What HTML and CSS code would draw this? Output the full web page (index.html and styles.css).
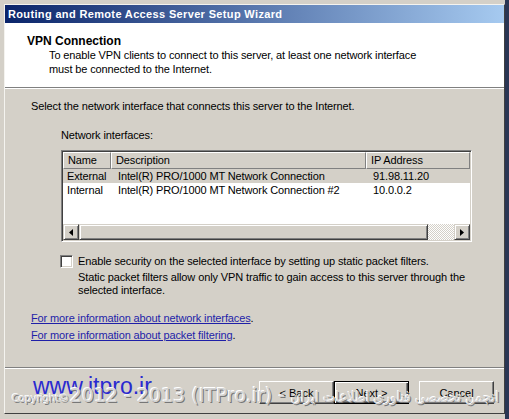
FILE: index.html
```html
<!DOCTYPE html>
<html lang="en">
<head>
	<meta charset="UTF-8">
	<title>Routing and Remote Access Server Setup Wizard</title>
	<link rel="stylesheet" href="styles.css">
</head>
<body>
	<div class="window">
		<div class="titlebar">Routing and Remote Access Server Setup Wizard</div>

		<div class="header">
			<div class="header-title">VPN Connection</div>
			<div class="header-desc">To enable VPN clients to connect to this server, at least one network interface<br>must be connected to the Internet.</div>
		</div>

		<div class="content">
			<p class="intro">Select the network interface that connects this server to the Internet.</p>

			<div class="group">
				<div class="list-label">Network interfaces:</div>
				<div class="listview">
					<div class="lv-head">
						<div class="hcol">Name</div>
						<div class="hcol">Description</div>
						<div class="hcol">IP Address</div>
					</div>
					<div class="lv-body">
						<div class="row selected">
							<span class="c-name">External</span>
							<span class="c-desc">Intel(R) PRO/1000 MT Network Connection</span>
							<span class="c-ip">91.98.11.20</span>
						</div>
						<div class="row">
							<span class="c-name">Internal</span>
							<span class="c-desc">Intel(R) PRO/1000 MT Network Connection #2</span>
							<span class="c-ip">10.0.0.2</span>
						</div>
					</div>
					<div class="hscroll">
						<div class="sb-btn">
							<svg width="4" height="7" viewBox="0 0 4 7"><polygon points="4,0 0,3.5 4,7" fill="#000"/></svg>
						</div>
						<div class="sb-thumb"></div>
						<div class="sb-track"></div>
						<div class="sb-btn">
							<svg width="4" height="7" viewBox="0 0 4 7"><polygon points="0,0 4,3.5 0,7" fill="#000"/></svg>
						</div>
					</div>
				</div>

				<div class="check">
					<span class="checkbox"></span>
					<div class="check-text">
						<div>Enable security on the selected interface by setting up static packet filters.</div>
						<div class="check-desc">Static packet filters allow only VPN traffic to gain access to this server through the<br>selected interface.</div>
					</div>
				</div>
			</div>

			<div class="links">
				<a href="#">For more information about network interfaces</a>.
				<br>
				<a href="#">For more information about packet filtering</a>.
			</div>
		</div>

		<div class="footer">
			<div class="site-mark">www.itpro.ir</div>
			<div class="copy-mark"><span class="copy-pre">Copyright©</span>2012 - 2013 (ITPro.ir) - <span class="copy-fa">انجمن تخصصی فناوری اطلاعات ایران</span></div>
			<button class="btn">&lt; <u>B</u>ack</button>
			<button class="btn default"><u>N</u>ext &gt;</button>
			<button class="btn cancel">Cancel</button>
		</div>
	</div>
</body>
</html>
```

FILE: styles.css
```css
body{
	margin: 0;
	height: 419px;
	overflow: hidden;
	background: linear-gradient(to right, #d4d0c8 505px, #2a3654 505px);
	font-family: "Liberation Sans", Arial, sans-serif;
	font-size: 11px;
	line-height: 14px;
	letter-spacing: -0.12px;
	color: #000;
}
.window{
	margin: 4px 0 0 4px;
	width: 499px;
	background: #d4d0c8;
	border-top: 1px solid #f4f3ef;
	border-left: 1px solid #f4f3ef;
	border-right: 1px solid #404040;
	border-bottom: 1px solid #404040;
}
.titlebar{
	height: 18px;
	line-height: 18px;
	padding-left: 3px;
	background: linear-gradient(to right, #0a246a, #a6caf0);
	color: #fff;
	font-weight: bold;
	letter-spacing: 0.35px;
}

/* header */
.header{
	height: 53px;
	padding: 11px 0 0 22px;
	background: #fff;
	border-bottom: 1px solid #808080;
	box-shadow: 0 1px 0 #fff;
}
.header-title{
	font-weight: bold;
	font-size: 12px;
	letter-spacing: 0;
}
.header-desc{
	padding-left: 22px;
}

/* body */
.content{
	height: 268px;
	padding: 10px 0 0 26px;
	margin-top: 1px;
	border-bottom: 1px solid #808080;
}
.intro{
	margin: 0;
}
.group{
	padding-left: 30px;
	margin-top: 15px;
}
.list-label{
	margin-bottom: 8px;
}
.listview{
	width: 407px;
	border-top: 1px solid #808080;
	border-left: 1px solid #808080;
	border-right: 1px solid #fff;
	border-bottom: 1px solid #fff;
	box-shadow: inset 1px 1px 0 #404040, inset -1px -1px 0 #d4d0c8;
	padding: 1px;
	background: #fff;
}
.lv-head{
	display: grid;
	grid-template-columns: 48px 255px 1fr;
	height: 17px;
}
.hcol{
	background: #d4d0c8;
	border-top: 1px solid #fff;
	border-left: 1px solid #fff;
	border-right: 1px solid #808080;
	border-bottom: 1px solid #808080;
	padding-left: 4px;
	line-height: 15px;
}
.lv-body{
	height: 55px;
}
.row{
	display: grid;
	grid-template-columns: 48px 255px 1fr;
	height: 14px;
	line-height: 14px;
}
.row.selected{
	background: #d4d0c8;
}
.c-name{
	padding-left: 4px;
}
.c-desc, .c-ip{
	padding-left: 7px;
}

/* scrollbar */
.hscroll{
	display: flex;
	height: 16px;
}
.sb-btn{
	width: 16px;
	height: 16px;
	box-sizing: border-box;
	background: #d4d0c8;
	border-top: 1px solid #d4d0c8;
	border-left: 1px solid #d4d0c8;
	border-right: 1px solid #404040;
	border-bottom: 1px solid #404040;
	box-shadow: inset 1px 1px 0 #fff, inset -1px -1px 0 #808080;
	display: flex;
	align-items: center;
	justify-content: center;
}
.sb-thumb{
	width: 349px;
	box-sizing: border-box;
	background: #d4d0c8;
	border-top: 1px solid #d4d0c8;
	border-left: 1px solid #d4d0c8;
	border-right: 1px solid #404040;
	border-bottom: 1px solid #404040;
	box-shadow: inset 1px 1px 0 #fff, inset -1px -1px 0 #808080;
}
.sb-track{
	flex: 1;
	background: repeating-conic-gradient(#fff 0 25%, #d4d0c8 0 50%) 0 0 / 2px 2px;
}

/* checkbox */
.check{
	display: flex;
	margin-top: 12px;
	margin-left: -1px;
}
.checkbox{
	flex: none;
	width: 9px;
	height: 9px;
	margin-top: 1px;
	margin-right: 5px;
	background: #fff;
	border-top: 1px solid #808080;
	border-left: 1px solid #808080;
	border-right: 1px solid #fff;
	border-bottom: 1px solid #fff;
	box-shadow: inset 1px 1px 0 #404040, inset -1px -1px 0 #d4d0c8;
	padding: 1px;
}
.check-desc{
	margin-top: 3px;
	line-height: 13px;
}

/* links */
.links{
	margin-top: 13px;
	line-height: 17px;
}
.links a{
	color: #1f1fa8;
}

/* footer */
.footer{
	position: relative;
	height: 45px;
	border-top: 1px solid #fff;
	display: flex;
	align-items: flex-start;
	justify-content: flex-end;
	padding-right: 10px;
	box-sizing: border-box;
	padding-top: 12px;
}
.btn{
	width: 75px;
	height: 23px;
	padding: 0;
	font-family: "Liberation Sans", Arial, sans-serif;
	font-size: 11px;
	color: #000;
	background: #d4d0c8;
	border-top: 1px solid #fff;
	border-left: 1px solid #fff;
	border-right: 1px solid #404040;
	border-bottom: 1px solid #404040;
	box-shadow: inset -1px -1px 0 #808080;
}
.btn u{
	text-decoration: none;
}
.btn.default{
	border: 1px solid #000;
	box-shadow: inset 1px 1px 0 #fff, inset -1px -1px 0 #404040, inset -2px -2px 0 #808080;
}
.btn.cancel{
	margin-left: 10px;
}

/* watermarks laid over the footer */
.site-mark{
	position: absolute;
	left: 28px;
	top: 4px;
	font-family: "Liberation Sans", Arial, sans-serif;
	font-size: 23px;
	line-height: 26px;
	letter-spacing: 0;
	color: #2a2ad0;
}
.copy-mark{
	position: absolute;
	left: 7px;
	top: 15px;
	z-index: 2;
	white-space: nowrap;
	font-family: "DejaVu Sans", "Liberation Sans", sans-serif;
	font-size: 19px;
	line-height: 22px;
	letter-spacing: 0;
	color: #d2d2d2;
	text-shadow: -1px -1px 0 #fff, 1px 1px 0 #777;
	pointer-events: none;
}
.copy-pre{
	font-size: 10.5px;
	letter-spacing: -0.5px;
	margin-right: 1px;
}
.copy-fa{
	display: inline-block;
	font-size: 15px;
	transform: scaleX(0.88);
	transform-origin: left center;
}
```
